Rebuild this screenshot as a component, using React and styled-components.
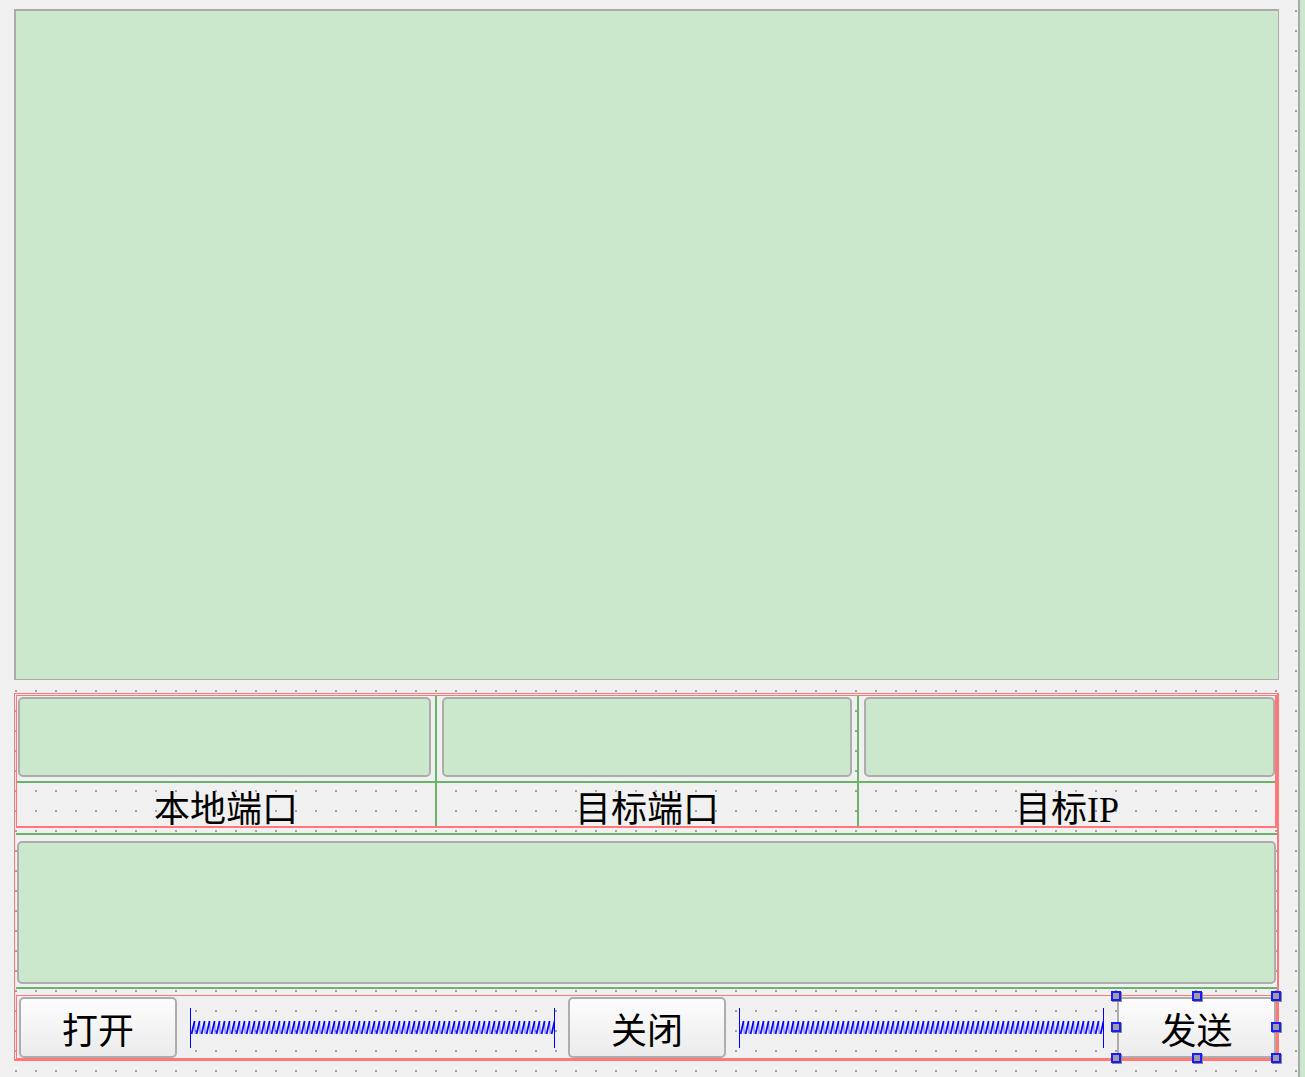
import React from "react";
import styled, { createGlobalStyle } from "styled-components";

const GlobalStyle = createGlobalStyle`
  html, body {
    margin: 0;
    padding: 0;
  }
  body {
    width: 1305px;
    height: 1077px;
    overflow: hidden;
    background: #cce8cc;
    font-family: "Liberation Serif", "Noto Sans CJK SC", serif;
  }
`;

const Page = styled.div`
  display: flex;
  height: 1077px;
`;

/* designer canvas with the dotted grid */
const Form = styled.div`
  box-sizing: border-box;
  width: 1300px;
  height: 100%;
  padding: 9px 0 0 14px;
  border-right: 2px solid #a8a8a8;
  background: conic-gradient(at 2px 2px, transparent 75%, #a3a3a3 0) 15px 10px / 20px 20px,
    #f0f0f0;
`;

const ReceiveEdit = styled.div`
  box-sizing: border-box;
  width: 1265px;
  height: 671px;
  background: #cce8cc;
  border: solid #ababab;
  border-width: 2px 1px 1px 2px;
`;

const VBox = styled.div`
  box-sizing: border-box;
  margin-top: 13px;
  width: 1265px;
  height: 368px;
  border: solid #ff7777;
  border-width: 1px 2px 2px 1px;
  padding: 1px 0 0 1px;
  display: flex;
  flex-direction: column;
`;

const GridBox = styled.div`
  box-sizing: border-box;
  height: 133px;
  flex: none;
  border: solid #ff7777;
  border-width: 1px 2px 2px 1px;
  display: grid;
  grid-template-columns: 418px 422px 418px;
  grid-template-rows: 87px 43px;
`;

const EditCell = styled.div`
  box-sizing: border-box;
  border-left: ${(p) => (p.$first ? "none" : "2px solid #6ab46a")};
  border-bottom: 2px solid #6ab46a;
  padding: ${(p) => p.$pad};
`;

const LineEdit = styled.div`
  box-sizing: border-box;
  height: 80px;
  background: #cce8cc;
  border: 2px solid #adadad;
  border-radius: 5px;
`;

const LabelCell = styled.div`
  border-left: ${(p) => (p.$first ? "none" : "2px solid #6ab46a")};
  display: flex;
  justify-content: center;
  align-items: center;
  padding-top: 11px;
  font-size: 36px;
  line-height: 1;
  color: #000;
`;

const Rule = styled.div`
  flex: none;
  height: 2px;
  background: #6ab46a;
  margin: ${(p) => p.$m};
`;

const SendEdit = styled.div`
  box-sizing: border-box;
  flex: none;
  margin-left: 1px;
  width: 1259px;
  height: 143px;
  background: #cce8cc;
  border: 2px solid #adadad;
  border-radius: 5px;
`;

const HBox = styled.div`
  box-sizing: border-box;
  flex: none;
  height: 64px;
  border: 1px solid #ff7777;
  padding: 1px 0 0 2px;
  display: flex;
  align-items: flex-start;
  gap: 13px;
`;

const PushButton = styled.button`
  position: relative;
  box-sizing: border-box;
  flex: none;
  width: ${(p) => p.$w}px;
  height: 61px;
  padding: 0;
  border: 2px solid #adadad;
  border-radius: ${(p) => (p.$selected ? 0 : 5)}px;
  background: linear-gradient(#fdfdfd, #ebebeb);
  font: 36px "Liberation Serif", "Noto Sans CJK SC", serif;
  color: #000;
`;

const Handle = styled.span`
  position: absolute;
  box-sizing: border-box;
  width: 10px;
  height: 10px;
  left: ${(p) => p.$x};
  top: ${(p) => p.$y};
  background: #9e9e9e;
  border: 2px solid #1a1aff;
  box-shadow: 1px 1px 0 #8a8a8a;
`;

const SpringBox = styled.div`
  box-sizing: border-box;
  flex: 1;
  align-self: center;
  height: 40px;
  border-left: 1px solid #0000ff;
  border-right: 1px solid #0000ff;
  svg {
    display: block;
    width: 100%;
    height: 100%;
  }
`;

const Spring = ({ id }) => (
  <SpringBox>
    <svg>
      <defs>
        <pattern id={id} width="5" height="40" patternUnits="userSpaceOnUse">
          <path d="M0.6 26 L3.6 13" fill="none" stroke="#0000ff" strokeWidth="1.7" />
          <path d="M3.6 13 L4.2 26" fill="none" stroke="#0000ff" strokeWidth="0.6" />
        </pattern>
      </defs>
      <rect x="0" y="0" width="100%" height="40" fill={`url(#${id})`} />
    </svg>
  </SpringBox>
);

const handles = [
  ["-8px", "-8px"],
  ["calc(50% - 5px)", "-8px"],
  ["calc(100% - 3px)", "-8px"],
  ["-8px", "calc(50% - 6px)"],
  ["calc(100% - 3px)", "calc(50% - 6px)"],
  ["-8px", "calc(100% - 3px)"],
  ["calc(50% - 5px)", "calc(100% - 3px)"],
  ["calc(100% - 3px)", "calc(100% - 3px)"],
];

const fields = [
  { label: "本地端口", pad: "1px 4px 0 1px" },
  { label: "目标端口", pad: "1px 5px 0 5px" },
  { label: "目标IP", pad: "1px 0 0 5px" },
];

export default function App() {
  return (
    <>
      <GlobalStyle />
      <Page>
        <Form>
          <ReceiveEdit />
          <VBox>
            <GridBox>
              {fields.map((f, i) => (
                <EditCell key={f.label} $first={i === 0} $pad={f.pad}>
                  <LineEdit />
                </EditCell>
              ))}
              {fields.map((f, i) => (
                <LabelCell key={f.label + "-l"} $first={i === 0}>
                  {f.label}
                </LabelCell>
              ))}
            </GridBox>
            <Rule $m="5px 0 6px" />
            <SendEdit />
            <Rule $m="3px 0 6px" />
            <HBox>
              <PushButton $w={158}>打开</PushButton>
              <Spring id="spring-a" />
              <PushButton $w={158}>关闭</PushButton>
              <Spring id="spring-b" />
              <PushButton $w={159} $selected>
                发送
                {handles.map(([x, y], i) => (
                  <Handle key={i} $x={x} $y={y} />
                ))}
              </PushButton>
            </HBox>
          </VBox>
        </Form>
      </Page>
    </>
  );
}
